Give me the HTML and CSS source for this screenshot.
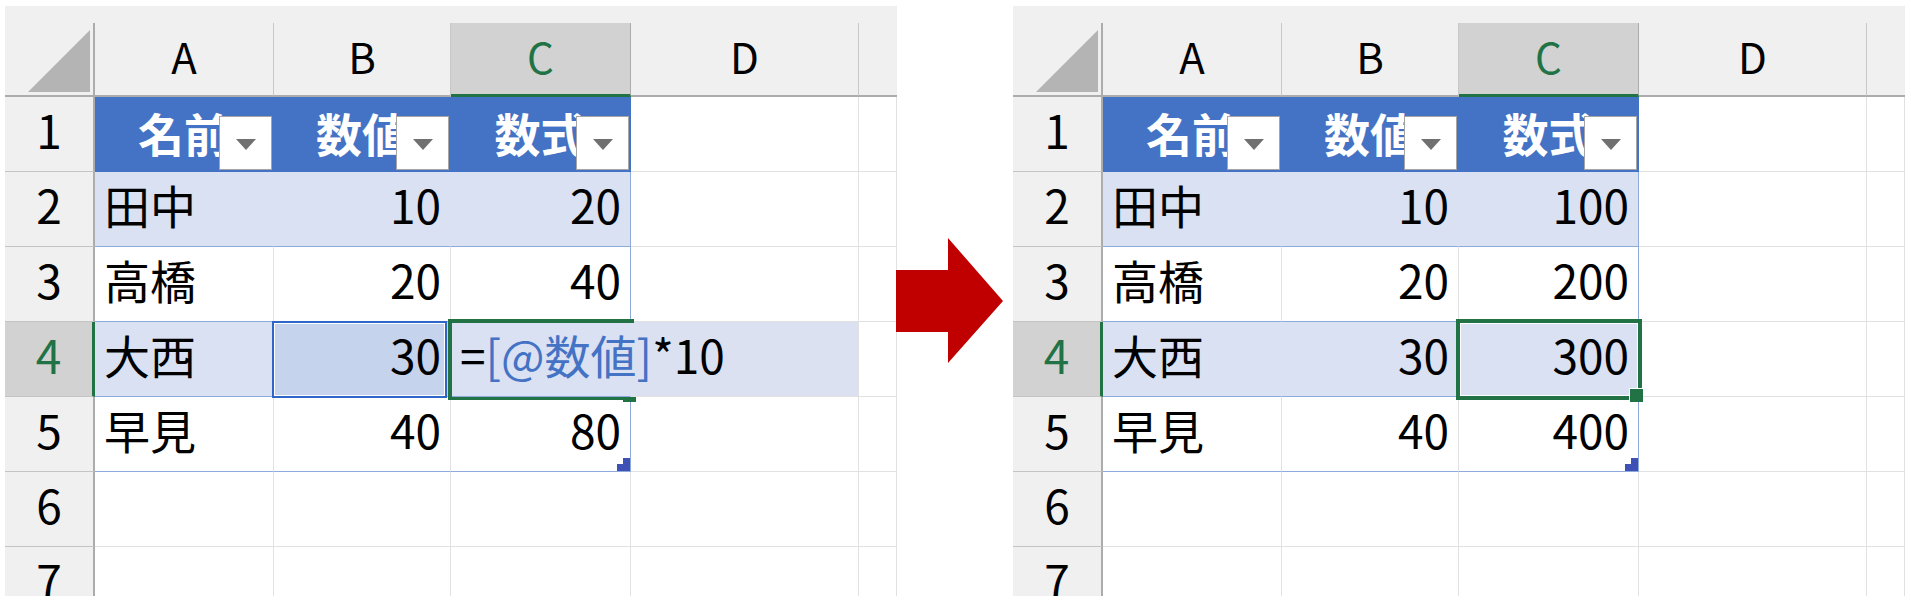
FILE: index.html
```html
<!DOCTYPE html>
<html lang="ja">
<head>
<meta charset="utf-8">
<link rel="stylesheet" href="styles.css">
</head>
<body>
<div class="page">
  <div class="sheet">
    <div class="strip"></div>
    <div class="grid">
      <div class="corner"><svg width="88" height="72" viewBox="0 0 88 72"><polygon points="23,69 85,69 85,7" fill="#b4b4b4"/></svg></div>
      <div class="ch">A</div><div class="ch">B</div><div class="ch sel">C</div><div class="ch">D</div><div class="ch last"></div>

      <div class="rh">1</div>
      <div class="c th">名前<span class="dd"></span></div>
      <div class="c th">数値<span class="dd"></span></div>
      <div class="c th">数式<span class="dd"></span></div>
      <div class="c"></div><div class="c"></div>

      <div class="rh">2</div>
      <div class="c band">田中</div>
      <div class="c band num">10</div>
      <div class="c band num lastcol">20</div>
      <div class="c"></div><div class="c"></div>

      <div class="rh">3</div>
      <div class="c tw">高橋</div>
      <div class="c tw num">20</div>
      <div class="c tw num lastcol">40</div>
      <div class="c"></div><div class="c"></div>

      <div class="rh sel">4</div>
      <div class="c band">大西</div>
      <div class="c band num refcell">30<span class="refbox"></span></div>
      <div class="c band edit"><span>=</span><span class="ref">[@数値]</span><span>*10</span><span class="gbox open"></span><span class="fh small"></span></div>
      <div class="c dfill"></div><div class="c"></div>

      <div class="rh">5</div>
      <div class="c tw">早見</div>
      <div class="c tw num">40</div>
      <div class="c tw num lastcol hold">80<svg class="rz" width="13" height="13" viewBox="0 0 13 13"><polygon points="6,0 13,0 13,13 0,13 0,6 6,6" fill="#3f51b5"/></svg></div>
      <div class="c"></div><div class="c"></div>

      <div class="rh">6</div>
      <div class="c"></div><div class="c"></div><div class="c"></div><div class="c"></div><div class="c"></div>

      <div class="rh">7</div>
      <div class="c"></div><div class="c"></div><div class="c"></div><div class="c"></div><div class="c"></div>
    </div>
  </div>

  <div class="arrow">
    <svg width="107" height="125" viewBox="0 0 107 125"><polygon points="0,32 52,32 52,0 107,63 52,125 52,94 0,94" fill="#c00000"/></svg>
  </div>

  <div class="sheet">
    <div class="strip"></div>
    <div class="grid">
      <div class="corner"><svg width="88" height="72" viewBox="0 0 88 72"><polygon points="23,69 85,69 85,7" fill="#b4b4b4"/></svg></div>
      <div class="ch">A</div><div class="ch">B</div><div class="ch sel">C</div><div class="ch">D</div><div class="ch last"></div>

      <div class="rh">1</div>
      <div class="c th">名前<span class="dd"></span></div>
      <div class="c th">数値<span class="dd"></span></div>
      <div class="c th">数式<span class="dd"></span></div>
      <div class="c"></div><div class="c"></div>

      <div class="rh">2</div>
      <div class="c band">田中</div>
      <div class="c band num">10</div>
      <div class="c band num lastcol">100</div>
      <div class="c"></div><div class="c"></div>

      <div class="rh">3</div>
      <div class="c tw">高橋</div>
      <div class="c tw num">20</div>
      <div class="c tw num lastcol">200</div>
      <div class="c"></div><div class="c"></div>

      <div class="rh sel">4</div>
      <div class="c band">大西</div>
      <div class="c band num">30</div>
      <div class="c band num lastcol active">300<span class="gbox full"></span><span class="fh"></span></div>
      <div class="c"></div><div class="c"></div>

      <div class="rh">5</div>
      <div class="c tw">早見</div>
      <div class="c tw num">40</div>
      <div class="c tw num lastcol hold">400<svg class="rz" width="13" height="13" viewBox="0 0 13 13"><polygon points="6,0 13,0 13,13 0,13 0,6 6,6" fill="#3f51b5"/></svg></div>
      <div class="c"></div><div class="c"></div>

      <div class="rh">6</div>
      <div class="c"></div><div class="c"></div><div class="c"></div><div class="c"></div><div class="c"></div>

      <div class="rh">7</div>
      <div class="c"></div><div class="c"></div><div class="c"></div><div class="c"></div><div class="c"></div>
    </div>
  </div>
</div>
</body>
</html>
```

FILE: styles.css
```css
* { box-sizing: border-box; }

body {
  margin: 0;
  background: #ffffff;
  font-family: "Noto Sans CJK JP", "Noto Sans", sans-serif;
  color: #000;
}

.page {
  display: flex;
  align-items: flex-start;
  width: 1911px;
  height: 604px;
  padding: 6px 0 0 5px;
  overflow: hidden;
}

.sheet {
  flex: none;
  width: 892px;
  height: 590px;
  overflow: hidden;
  display: flex;
  flex-direction: column;
}

.strip {
  flex: none;
  height: 17px;
  background: #f0f0f0;
}

.grid {
  flex: none;
  display: grid;
  grid-template-columns: 90px 179px 177px 180px 228px 38px;
  grid-template-rows: 74px repeat(7, 75px);
  background: #ffffff;
}

.corner {
  background: #f0f0f0;
  border-right: 2px solid #acacac;
  border-bottom: 2px solid #acacac;
}
.corner svg { display: block; }

.ch {
  background: #f0f0f0;
  border-right: 1px solid #c8c8c8;
  border-bottom: 2px solid #acacac;
  text-align: center;
  font-size: 42px;
  line-height: 65px;
}
.ch.last { border-right: none; }
.ch.sel {
  background: #d2d2d2;
  color: #217346;
  border-bottom: 3px solid #217346;
  border-right-color: #ababab;
}

.rh {
  background: #f0f0f0;
  border-right: 2px solid #acacac;
  border-bottom: 1px solid #c4c4c4;
  text-align: center;
  font-size: 46px;
  line-height: 64px;
}
.rh.sel {
  background: #d2d2d2;
  color: #217346;
  border-right: 3px solid #217346;
}

.c {
  border-right: 1px solid #e1e1e1;
  border-bottom: 1px solid #e1e1e1;
  font-size: 46px;
  line-height: 64px;
  padding: 0 9px;
  white-space: nowrap;
  overflow: hidden;
}
.num { text-align: right; }

.th {
  position: relative;
  background: #4472c4;
  color: #ffffff;
  font-weight: bold;
  text-align: center;
  line-height: 70px;
  padding: 0;
  border-right-color: #4472c4;
  border-bottom-color: #4472c4;
}

.dd {
  position: absolute;
  right: 1px;
  top: 19px;
  width: 53px;
  height: 54px;
  background: #ffffff;
  border: 1px solid #a5a5a5;
  display: flex;
  align-items: center;
  justify-content: center;
}
.dd::after {
  content: "";
  width: 0;
  height: 0;
  border-left: 10.5px solid transparent;
  border-right: 10.5px solid transparent;
  border-top: 11px solid #707070;
  margin-top: 2px;
}

.band {
  background: #d9e1f2;
  border-right-color: #d9e1f2;
  border-bottom-color: #8ea9db;
}
.tw { border-bottom-color: #8ea9db; }
.lastcol { border-right-color: #8ea9db; }

.refcell {
  position: relative;
  overflow: visible;
  background: #c6d3ec;
}
.refbox {
  position: absolute;
  left: -2px;
  top: -1px;
  right: 3px;
  bottom: -2px;
  border: 2px solid #2f66c9;
  box-shadow: inset 0 0 0 1px #ffffff;
}

.edit {
  position: relative;
  z-index: 2;
  overflow: visible;
  padding-left: 9px;
}
.ref { color: #4472c4; }

.dfill { background: #dbe1f0; }

.gbox {
  position: absolute;
  border: 4px solid #217346;
}
.gbox.open {
  left: -3px;
  top: -3px;
  width: 186px;
  height: 81px;
  border-right: none;
  border-bottom-width: 3px;
}
.gbox.full {
  left: -3px;
  top: -3px;
  right: -4px;
  bottom: -4px;
  box-shadow: inset 0 0 0 1px #ffffff;
}

.active {
  position: relative;
  z-index: 2;
  overflow: visible;
}

.fh {
  position: absolute;
  left: 171px;
  top: 67px;
  width: 13px;
  height: 13px;
  background: #217346;
  box-shadow: -1px -1px 0 #ffffff;
}
.fh.small {
  left: 172px;
  top: 75px;
  height: 5px;
  box-shadow: none;
}

.hold { position: relative; }
.rz {
  position: absolute;
  right: 0;
  bottom: 0;
  display: block;
}

.arrow {
  flex: none;
  width: 116px;
}
.arrow svg {
  display: block;
  margin-top: 232px;
  margin-left: -1px;
}
```
